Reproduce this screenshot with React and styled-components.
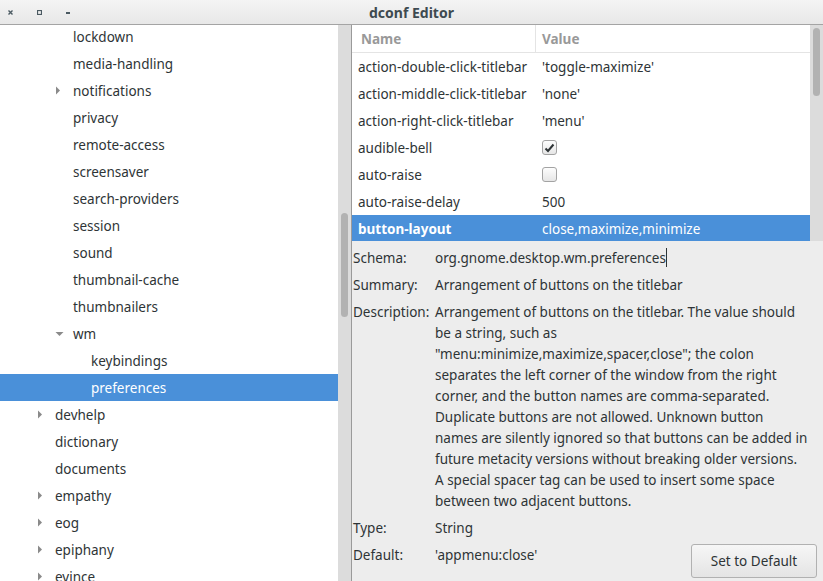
import styled, { createGlobalStyle } from 'styled-components';

const Global = createGlobalStyle`
  html, body { margin: 0; padding: 0; }
  body {
    font-family: "Noto Sans", "DejaVu Sans", sans-serif;
    font-size: 13.5px;
    color: #2e3436;
    background: #ededed;
  }
`

const Window = styled.div`
  width: 823px;
  height: 581px;
  display: flex;
  flex-direction: column;
  overflow: hidden;
  background: #ededed;
`

const TitleBar = styled.div`
  height: 24px;
  flex: none;
  display: grid;
  grid-template-columns: 1fr auto 1fr;
  align-items: center;
  background: linear-gradient(#f4f4f4, #e8e8e8);
  border-bottom: 1px solid #a4a4a4;
`

const Controls = styled.div`
  display: flex;
  align-items: center;
  padding-left: 8px;
`

const Ctl = styled.span`
  width: 29px;
  height: 20px;
  display: flex;
  align-items: center;
`

const Title = styled.div`
  font-weight: bold;
  font-size: 14px;
  color: #3e4a50;
`

const Body = styled.div`
  flex: 1;
  display: flex;
  min-height: 0;
`

const TreePane = styled.div`
  width: 351px;
  flex: none;
  display: flex;
  border-right: 1px solid #9a9a9a;
`

const TreeList = styled.div`
  flex: 1;
  background: #fff;
  overflow: hidden;
`

const TreeScroll = styled.div`
  margin-top: -2px;
`

const TreeRow = styled.div`
  height: 27px;
  display: flex;
  align-items: center;
  padding-left: ${p => p.$indent}px;
  background: ${p => (p.$selected ? '#4a90d9' : 'transparent')};
  color: ${p => (p.$selected ? '#fff' : '#2e3436')};
`

const Expander = styled.span`
  width: 18px;
  flex: none;
  display: flex;
  align-items: center;
`

const Track = styled.div`
  width: 13px;
  flex: none;
  background: #dcdcdc;
  position: relative;
`

const Thumb = styled.div`
  position: absolute;
  left: 3px;
  width: 7px;
  top: ${p => p.$top}px;
  height: ${p => p.$h}px;
  border-radius: 4px;
  background: #b2b2b2;
`

const RightPane = styled.div`
  flex: 1;
  display: flex;
  flex-direction: column;
  min-width: 0;
`

const KeysView = styled.div`
  height: 216px;
  flex: none;
  display: flex;
  background: #fff;
`

const KeysTable = styled.div`
  flex: 1;
  overflow: hidden;
`

const Row = styled.div`
  height: 27px;
  display: grid;
  grid-template-columns: 184px 1fr;
  align-items: center;
  background: ${p => (p.$selected ? '#4a90d9' : 'transparent')};
  color: ${p => (p.$selected ? '#fff' : '#2e3436')};
`

const HeaderRow = styled(Row)`
  height: 27px;
  border-bottom: 1px solid #e4e4e4;
  color: #999;
  font-weight: bold;
`

const Cell = styled.div`
  padding-left: ${p => p.$pad || 6}px;
  white-space: nowrap;
  font-weight: ${p => (p.$bold ? 'bold' : 'inherit')};
  height: 100%;
  display: flex;
  align-items: center;
  border-right: ${p => (p.$divider ? '1px solid #e4e4e4' : 'none')};
  box-sizing: border-box;
`

const Check = styled.span`
  width: 13px;
  height: 13px;
  border: 1px solid #a3a3a3;
  border-radius: 3px;
  background: linear-gradient(#fdfdfd, #e6e6e6);
  display: flex;
  align-items: center;
  justify-content: center;
`

const Details = styled.div`
  flex: 1;
  background: #ededed;
  display: grid;
  grid-template-columns: 82px 1fr auto;
  grid-auto-rows: min-content;
  row-gap: 6px;
  padding: 7px 6px 0 1px;
  line-height: 21px;
  align-content: start;
`

const Label = styled.div`
  grid-column: 1;
`

const Value = styled.div`
  grid-column: ${p => (p.$wide ? '2 / 4' : '2')};
`

const Line = styled.span`
  display: block;
  white-space: nowrap;
`

const Caret = styled.span`
  display: inline-block;
  width: 1px;
  height: 19px;
  background: #2e3436;
  vertical-align: -4px;
`

const Button = styled.button`
  grid-column: 3;
  align-self: start;
  width: 126px;
  height: 34px;
  margin-top: -1px;
  font: inherit;
  color: #2e3436;
  border: 1px solid #b1b1b1;
  border-radius: 3px;
  background: linear-gradient(#f6f6f6, #e4e4e4);
`

const RightArrow = () => (
  <svg width="6" height="9" viewBox="0 0 6 9"><path d="M1 0.5 L5 4.5 L1 8.5 Z" fill="#8a8a8a" /></svg>
)
const DownArrow = () => (
  <svg width="9" height="6" viewBox="0 0 9 6"><path d="M0.5 1 L8.5 1 L4.5 5 Z" fill="#8a8a8a" /></svg>
)

const tree = [
  { name: 'lockdown', indent: 55 },
  { name: 'media-handling', indent: 55 },
  { name: 'notifications', indent: 55, exp: 'right' },
  { name: 'privacy', indent: 55 },
  { name: 'remote-access', indent: 55 },
  { name: 'screensaver', indent: 55 },
  { name: 'search-providers', indent: 55 },
  { name: 'session', indent: 55 },
  { name: 'sound', indent: 55 },
  { name: 'thumbnail-cache', indent: 55 },
  { name: 'thumbnailers', indent: 55 },
  { name: 'wm', indent: 55, exp: 'down' },
  { name: 'keybindings', indent: 73 },
  { name: 'preferences', indent: 73, selected: true },
  { name: 'devhelp', indent: 37, exp: 'right' },
  { name: 'dictionary', indent: 37 },
  { name: 'documents', indent: 37 },
  { name: 'empathy', indent: 37, exp: 'right' },
  { name: 'eog', indent: 37, exp: 'right' },
  { name: 'epiphany', indent: 37, exp: 'right' },
  { name: 'evince', indent: 37, exp: 'right' },
]

const keys = [
  ['action-double-click-titlebar', "'toggle-maximize'"],
  ['action-middle-click-titlebar', "'none'"],
  ['action-right-click-titlebar', "'menu'"],
  ['audible-bell', 'check'],
  ['auto-raise', 'uncheck'],
  ['auto-raise-delay', '500'],
  ['button-layout', 'close,maximize,minimize', true],
]

const description = [
  'Arrangement of buttons on the titlebar. The value should',
  'be a string, such as',
  '"menu:minimize,maximize,spacer,close"; the colon',
  'separates the left corner of the window from the right',
  'corner, and the button names are comma-separated.',
  'Duplicate buttons are not allowed. Unknown button',
  'names are silently ignored so that buttons can be added in',
  'future metacity versions without breaking older versions.',
  'A special spacer tag can be used to insert some space',
  'between two adjacent buttons.',
]

function renderValue(v) {
  if (v === 'check') {
    return (
      <Check>
        <svg width="11" height="10" viewBox="0 0 11 10">
          <path d="M1.5 5.5 L4 8 L9.5 1.5" stroke="#2e3436" strokeWidth="2" fill="none" />
        </svg>
      </Check>
    )
  }
  if (v === 'uncheck') return <Check />
  return v
}

export default function App() {
  return (
    <>
      <Global />
      <Window>
        <TitleBar>
          <Controls>
            <Ctl>
              <svg width="5" height="5" viewBox="0 0 5 5"><path d="M0.5 0.5 L4.5 4.5 M4.5 0.5 L0.5 4.5" stroke="#4b5a62" strokeWidth="1.4" /></svg>
            </Ctl>
            <Ctl>
              <svg width="5" height="5" viewBox="0 0 5 5"><rect x="0.5" y="0.5" width="4" height="4" fill="none" stroke="#4b5a62" strokeWidth="1.2" /></svg>
            </Ctl>
            <Ctl>
              <svg width="4" height="6" viewBox="0 0 4 6"><rect x="0" y="3" width="4" height="2" fill="#4b5a62" /></svg>
            </Ctl>
          </Controls>
          <Title>dconf Editor</Title>
          <div />
        </TitleBar>
        <Body>
          <TreePane>
            <TreeList>
              <TreeScroll>
                {tree.map(t => (
                  <TreeRow key={t.name} $indent={t.indent} $selected={t.selected}>
                    <Expander>
                      {t.exp === 'right' && <RightArrow />}
                      {t.exp === 'down' && <DownArrow />}
                    </Expander>
                    {t.name}
                  </TreeRow>
                ))}
              </TreeScroll>
            </TreeList>
            <Track>
              <Thumb $top={188} $h={104} />
            </Track>
          </TreePane>
          <RightPane>
            <KeysView>
              <KeysTable>
                <HeaderRow>
                  <Cell $divider $pad={9}>Name</Cell>
                  <Cell>Value</Cell>
                </HeaderRow>
                {keys.map(([k, v, sel]) => (
                  <Row key={k} $selected={sel}>
                    <Cell $bold={sel}>{k}</Cell>
                    <Cell>{renderValue(v)}</Cell>
                  </Row>
                ))}
              </KeysTable>
              <Track>
                <Thumb $top={3} $h={68} />
              </Track>
            </KeysView>
            <Details>
              <Label>Schema:</Label>
              <Value $wide>org.gnome.desktop.wm.preferences<Caret /></Value>
              <Label>Summary:</Label>
              <Value $wide>Arrangement of buttons on the titlebar</Value>
              <Label>Description:</Label>
              <Value $wide>
                {description.map(l => <Line key={l}>{l}</Line>)}
              </Value>
              <Label>Type:</Label>
              <Value $wide>String</Value>
              <Label>Default:</Label>
              <Value>'appmenu:close'</Value>
              <Button>Set to Default</Button>
            </Details>
          </RightPane>
        </Body>
      </Window>
    </>
  )
}
